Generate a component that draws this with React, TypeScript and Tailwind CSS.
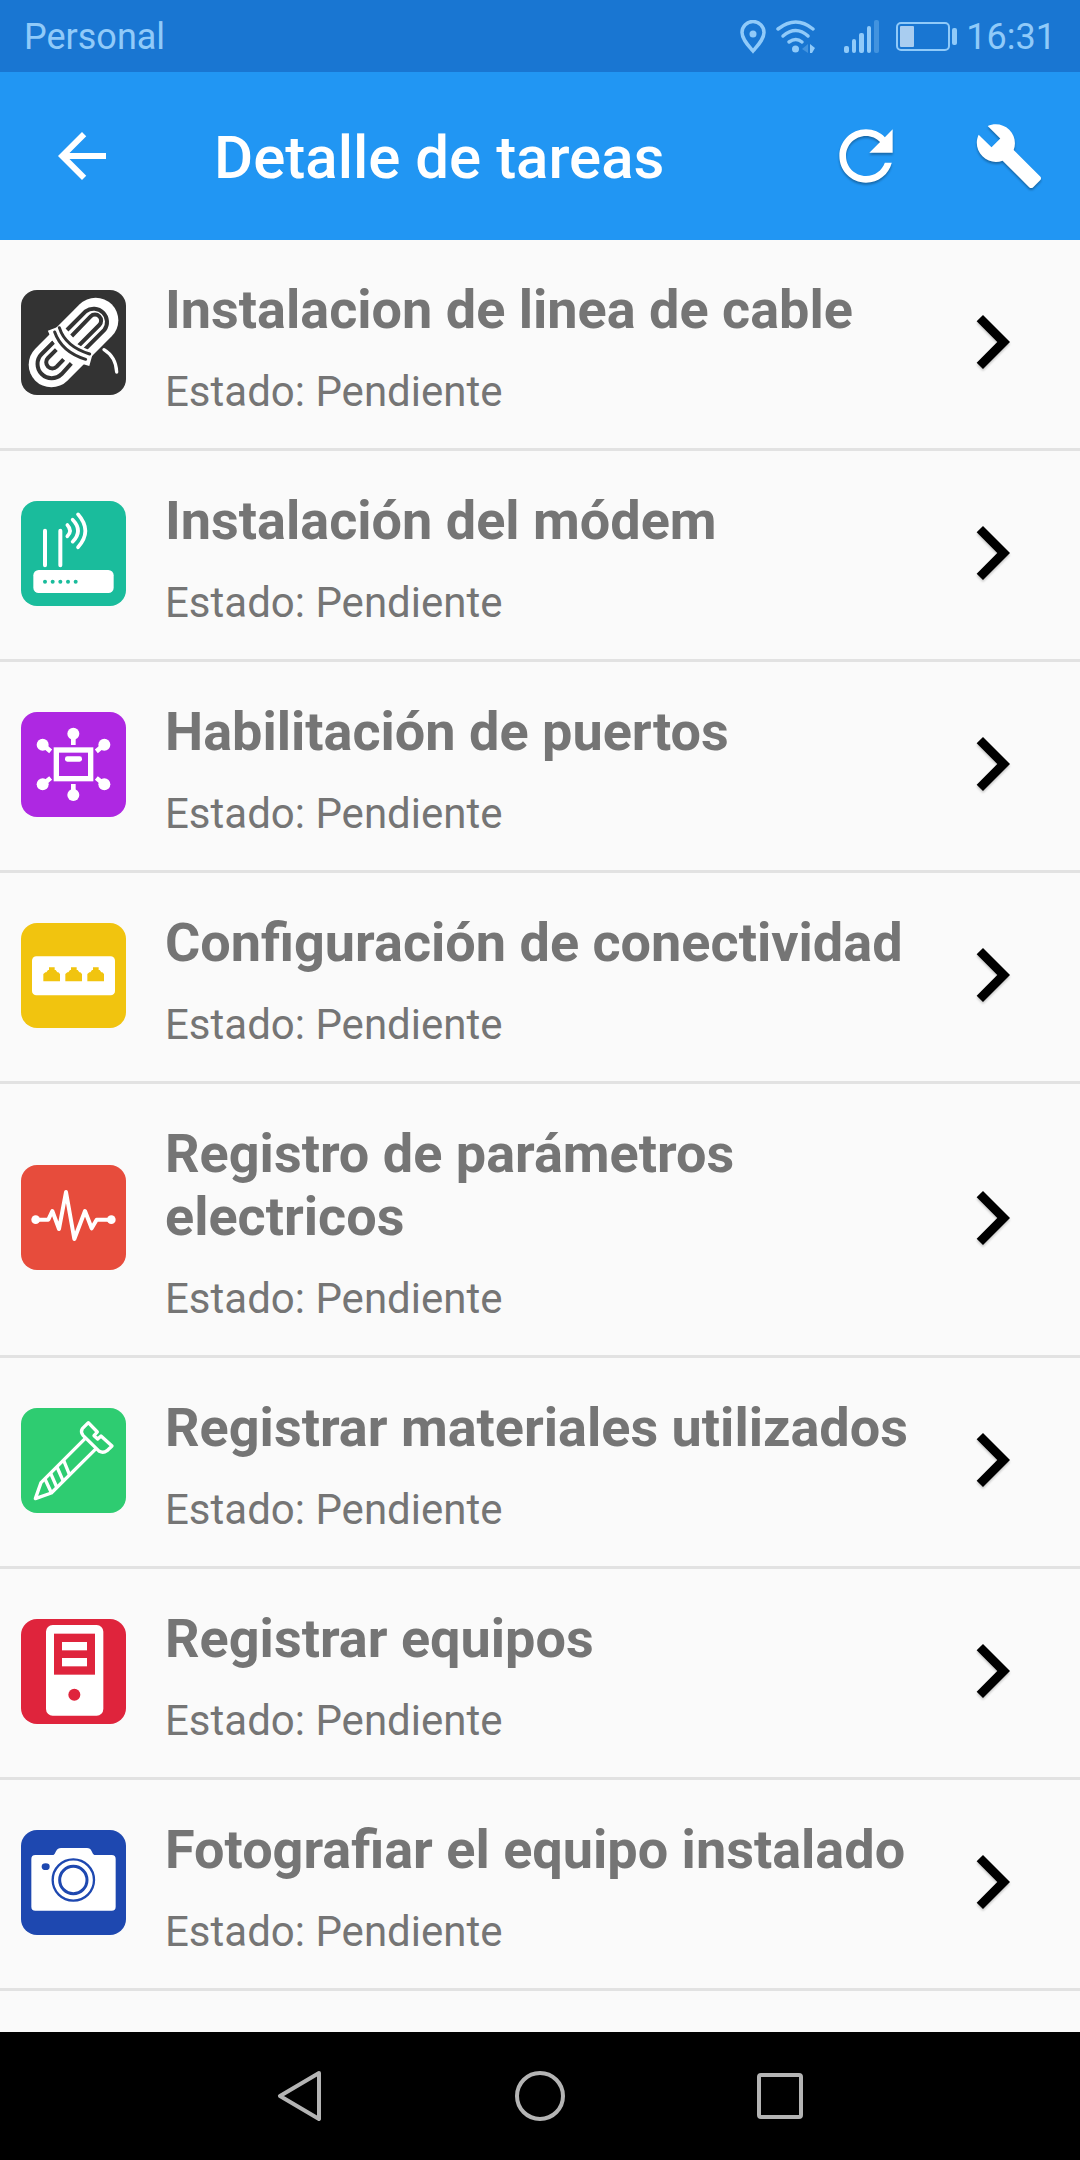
import type { ReactNode } from "react";

type Task = {
  id: string;
  title: string;
  status: string;
  tileClass: string;
  icon: ReactNode;
};

function RopeIcon() {
  return (
    <svg viewBox="0 0 315 315" className="h-full w-full" fill="none" strokeLinecap="round">
      <path d="M91 224L224 91" stroke="#fff" strokeWidth="136" />
      <g stroke="#333" strokeWidth="12" strokeLinecap="butt">
        <path d="M138 120L194 64A40 40 0 0 1 250 120L182 188" />
        <path d="M152 138L209 79A18 18 0 0 1 235 105L168 172" />
        <path d="M98 156L62 192A42 42 0 0 0 122 252L151 220" />
        <path d="M106 179L81 204A18 18 0 0 0 107 230L128 208" />
      </g>
      <path d="M102 114Q128 183 211 206" stroke="#fff" strokeWidth="46" strokeLinecap="butt" />
      <g stroke="#333" strokeWidth="9">
        <path d="M101 126Q122 186 194 208" />
        <path d="M115 113Q133 170 206 192" />
      </g>
      <path d="M249 179Q285 201 287 246" stroke="#fff" strokeWidth="10" />
    </svg>
  );
}

function ModemIcon() {
  return (
    <svg viewBox="0 0 315 315" className="h-full w-full" fill="none" stroke="#fff" strokeLinecap="round">
      <path d="M72 89V193M118 89V193" strokeWidth="12" />
      <path d="M139 72Q155 89 139 106M155 56Q187 89 155 122M171 40Q215 90 171 139" strokeWidth="11" />
      <rect x="37" y="207" width="241" height="69" rx="16" fill="#fff" stroke="none" />
      <g fill="#1abc9c" stroke="none">
        <circle cx="72" cy="242" r="6" />
        <circle cx="95" cy="242" r="6" />
        <circle cx="118" cy="242" r="6" />
        <circle cx="141" cy="242" r="6" />
        <circle cx="164" cy="242" r="6" />
      </g>
    </svg>
  );
}

function PortsIcon() {
  return (
    <svg viewBox="0 0 315 315" className="h-full w-full" fill="#fff" stroke="#fff">
      <rect x="106" y="114" width="103" height="86" fill="none" strokeWidth="16" />
      <rect x="132" y="133" width="51" height="16" rx="7" stroke="none" />
      <path
        d="M157 65V99M65 98L89 118M250 98L226 118M65 217L89 198M250 217L226 198M157 249V216"
        strokeWidth="14"
      />
      <g stroke="none">
        <circle cx="157" cy="65" r="18" />
        <circle cx="65" cy="98" r="18" />
        <circle cx="250" cy="98" r="18" />
        <circle cx="65" cy="217" r="18" />
        <circle cx="250" cy="217" r="18" />
        <circle cx="157" cy="249" r="18" />
      </g>
    </svg>
  );
}

function SwitchIcon() {
  return (
    <svg viewBox="0 0 315 315" className="h-full w-full">
      <rect x="33" y="100" width="249" height="117" rx="13" fill="#fff" />
      <g fill="#f1c40f">
        <path d="M67 175V153L73 148H76L81 141H84V133H101V141H104L109 148H112L117 153V175Z" />
        <path d="M133 175V153L139 148H142L147 141H150V133H167V141H170L175 148H178L183 153V175Z" />
        <path d="M199 175V153L205 148H208L213 141H216V133H233V141H236L241 148H244L249 153V175Z" />
      </g>
    </svg>
  );
}

function PulseIcon() {
  return (
    <svg viewBox="0 0 315 315" className="h-full w-full">
      <path
        d="M44 164H82L94 138L114 192L135 81L160 222L192 138L212 190L227 164H271"
        fill="none"
        stroke="#fff"
        strokeWidth="12"
        strokeLinecap="round"
        strokeLinejoin="round"
      />
      <circle cx="44" cy="164" r="13" fill="#fff" />
      <circle cx="271" cy="164" r="13" fill="#fff" />
    </svg>
  );
}

function ScrewIcon() {
  return (
    <svg
      viewBox="0 0 315 315"
      className="h-full w-full"
      fill="none"
      stroke="#fff"
      strokeWidth="10"
      strokeLinejoin="round"
    >
      <path d="M192 92L60 224L43 272L91 255L226 121" />
      <path d="M202 44L184 62Q178 72 186 82L235 130Q247 136 258 128L273 114L240 84L230 93L219 83L229 72Z" />
      <path d="M128 157L145 199M108 177L126 218M89 196L107 237M72 213L90 252" />
    </svg>
  );
}

function ComputerIcon() {
  return (
    <svg viewBox="0 0 315 315" className="h-full w-full">
      <rect x="75" y="18" width="172" height="272" rx="20" fill="#fff" />
      <rect x="99" y="44" width="123" height="123" fill="#df243c" />
      <rect x="123" y="69" width="75" height="25" fill="#fff" />
      <rect x="123" y="117" width="75" height="25" fill="#fff" />
      <circle cx="160" cy="227" r="18" fill="#df243c" />
    </svg>
  );
}

function CameraIcon() {
  return (
    <svg viewBox="0 0 315 315" className="h-full w-full">
      <rect x="31" y="75" width="253" height="167" rx="12" fill="#fff" />
      <path d="M94 78Q101 75 105 64Q110 54 120 54H198Q208 54 212 64Q215 75 224 78Z" fill="#fff" />
      <g fill="none" stroke="#1e48b0">
        <circle cx="157" cy="150" r="62" strokeWidth="7" />
        <circle cx="157" cy="150" r="41" strokeWidth="9" />
      </g>
      <ellipse cx="74" cy="110" rx="12" ry="10" fill="#1e48b0" />
    </svg>
  );
}

const TASKS: Task[] = [
  { id: "cable", title: "Instalacion de linea de cable", status: "Pendiente", tileClass: "bg-[#333333]", icon: <RopeIcon /> },
  { id: "modem", title: "Instalación del módem", status: "Pendiente", tileClass: "bg-[#1abc9c]", icon: <ModemIcon /> },
  { id: "puertos", title: "Habilitación de puertos", status: "Pendiente", tileClass: "bg-[#ae28e2]", icon: <PortsIcon /> },
  { id: "conectividad", title: "Configuración de conectividad", status: "Pendiente", tileClass: "bg-[#f1c40f]", icon: <SwitchIcon /> },
  { id: "parametros", title: "Registro de parámetros electricos", status: "Pendiente", tileClass: "bg-[#e74c3c]", icon: <PulseIcon /> },
  { id: "materiales", title: "Registrar materiales utilizados", status: "Pendiente", tileClass: "bg-[#2ecc71]", icon: <ScrewIcon /> },
  { id: "equipos", title: "Registrar equipos", status: "Pendiente", tileClass: "bg-[#df243c]", icon: <ComputerIcon /> },
  { id: "foto", title: "Fotografiar el equipo instalado", status: "Pendiente", tileClass: "bg-[#1e48b0]", icon: <CameraIcon /> },
];

function StatusBar() {
  return (
    <div className="flex h-18 items-center justify-between bg-[#1976d2] px-6 pt-0.5 text-4xl text-[#90caf9]">
      <span>Personal</span>
      <div className="flex items-center">
        <svg viewBox="0 0 26 34" className="mr-2.5 h-[34px] w-[26px]" fill="none" stroke="currentColor" strokeWidth="3.5">
          <path d="M13 31C8 25 2 19 2 12.500a11 11 0 0 1 22 0C24 19 18 25 13 31Z" />
          <circle cx="13" cy="14" r="3.500" fill="currentColor" stroke="none" />
        </svg>
        <svg viewBox="0 0 40 34" className="mr-7 h-[34px] w-10" fill="none" stroke="currentColor" strokeWidth="3.5" strokeLinecap="round">
          <path d="M2 9Q20-5 37 9" />
          <path d="M7 16Q20 5 32 16" />
          <path d="M13 22Q20 17 26 22" />
          <circle cx="19.500" cy="29" r="3.500" fill="currentColor" stroke="none" />
          <path d="M26 29L32 24V33Z" fill="currentColor" stroke="none" opacity=".35" />
          <path d="M34 24L39 28L36 33L34 33Z" fill="currentColor" stroke="none" />
        </svg>
        <svg viewBox="0 0 36 34" className="mr-4 h-[34px] w-9" fill="currentColor">
          <rect x="0" y="26" width="5" height="7" rx="2" />
          <rect x="8" y="19" width="4" height="14" rx="2" />
          <rect x="15" y="13" width="5" height="20" rx="2" />
          <rect x="23" y="6" width="4" height="27" rx="2" />
          <rect x="30" y="0" width="5" height="33" rx="2" opacity=".35" />
        </svg>
        <svg viewBox="0 0 62 30" className="mr-2 h-[30px] w-[62px]" fill="currentColor">
          <rect x="1" y="1" width="52" height="27" rx="4" fill="none" stroke="currentColor" strokeWidth="2" />
          <rect x="4" y="4" width="14" height="21" rx="1" fill="#a9cdf0" />
          <rect x="56" y="6" width="5" height="17" rx="2" />
        </svg>
        <span>16:31</span>
      </div>
    </div>
  );
}

function AppBar() {
  return (
    <header className="flex h-42 items-center bg-[#2196f3] pr-9 pl-[46px] text-white">
      <button type="button" aria-label="Volver">
        <svg viewBox="0 0 24 24" className="size-[72px]" fill="currentColor">
          <path d="M20 11H7.830l5.590-5.590L12 4l-8 8 8 8 1.410-1.410L7.830 13H20v-2z" />
        </svg>
      </button>
      <h1 className="ml-24 flex-1 pt-1 text-6xl font-medium">Detalle de tareas</h1>
      <button type="button" aria-label="Actualizar" className="mr-17">
        <svg viewBox="0 0 24 24" className="size-20 drop-shadow-[0_2px_1px_rgba(0,0,0,0.3)]" fill="currentColor">
          <path d="M17.650 6.350C16.200 4.900 14.210 4 12 4c-4.420 0-7.990 3.580-7.990 8s3.570 8 7.990 8c3.730 0 6.840-2.550 7.730-6h-2.080c-.82 2.330-3.040 4-5.650 4-3.310 0-6-2.690-6-6s2.690-6 6-6c1.660 0 3.140.69 4.220 1.780L13 11h7V4l-2.350 2.350z" />
        </svg>
      </button>
      <button type="button" aria-label="Herramientas">
        <svg viewBox="0 0 24 24" className="size-[70px] drop-shadow-[0_2px_1px_rgba(0,0,0,0.3)]" fill="currentColor">
          <path d="M22.700 19l-9.100-9.100c.9-2.300.4-5-1.500-6.900-2-2-5-2.400-7.400-1.300L9 6 6 9 1.600 4.700C.4 7.100.9 10.100 2.900 12.100c1.900 1.900 4.600 2.400 6.900 1.500l9.100 9.100c.4.4 1 .4 1.400 0l2.300-2.300c.5-.4.5-1.100.1-1.400z" />
        </svg>
      </button>
    </header>
  );
}

function TaskRow({ task }: { task: Task }) {
  return (
    <li className="border-b-3 border-[#e2e2e2]">
      <a href={`#${task.id}`} className="flex items-center pr-[34px] pb-1 pl-[21px]">
        <div className={`size-[105px] shrink-0 overflow-hidden rounded-2xl ${task.tileClass}`}>{task.icon}</div>
        <div className="ml-[39px] min-w-0 flex-1 pt-[38px] pb-7 text-[#757575]">
          <h2 className="text-[54px] leading-[63px] font-bold">{task.title}</h2>
          <p className="mt-[26px] text-[42px] leading-[49px]">Estado: {task.status}</p>
        </div>
        <svg
          viewBox="0 0 24 24"
          className="size-27 shrink-0 text-black drop-shadow-[0_2px_1px_rgba(0,0,0,0.2)]"
          fill="currentColor"
        >
          <path d="M10 6L8.590 7.410 13.170 12l-4.580 4.590L10 18l6-6z" />
        </svg>
      </a>
    </li>
  );
}

function NavBar() {
  return (
    <nav className="flex h-32 items-center justify-center bg-black text-[#b4b4b4]">
      <button type="button" aria-label="Atrás" className="flex w-60 justify-center">
        <svg viewBox="0 0 50 50" className="size-[50px]" fill="none" stroke="currentColor" strokeWidth="4" strokeLinejoin="round">
          <path d="M44 2L5 25L44 48Z" />
        </svg>
      </button>
      <button type="button" aria-label="Inicio" className="flex w-60 justify-center">
        <svg viewBox="0 0 50 50" className="size-[50px]" fill="none" stroke="currentColor" strokeWidth="4">
          <circle cx="25" cy="25" r="23" />
        </svg>
      </button>
      <button type="button" aria-label="Recientes" className="flex w-60 justify-center">
        <svg viewBox="0 0 50 50" className="size-[50px]" fill="none" stroke="currentColor" strokeWidth="4">
          <rect x="4" y="4" width="42" height="42" rx="2" />
        </svg>
      </button>
    </nav>
  );
}

export default function App() {
  return (
    <div className="flex min-h-screen flex-col bg-[#fafafa] font-[Roboto,'Liberation_Sans',sans-serif]">
      <StatusBar />
      <AppBar />
      <main className="flex-1">
        <ul>
          {TASKS.map((task) => (
            <TaskRow key={task.id} task={task} />
          ))}
        </ul>
      </main>
      <NavBar />
    </div>
  );
}
